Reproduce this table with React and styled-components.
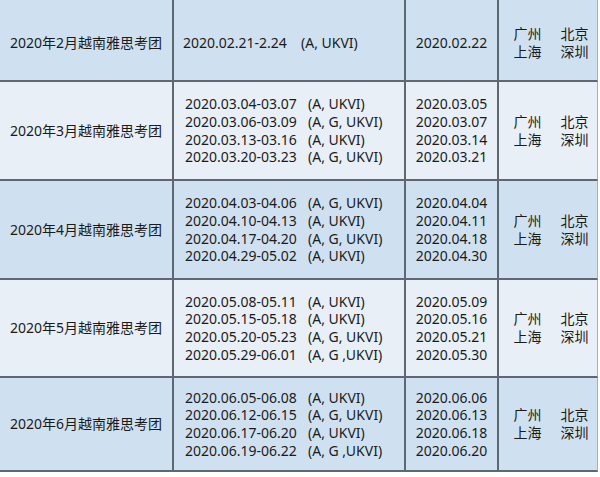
import React from "react";
import styled, { createGlobalStyle } from "styled-components";

const Global = createGlobalStyle`
  html, body { margin: 0; padding: 0; background: #ffffff; }
  body { font-family: "Noto Sans", "Noto Sans CJK SC", sans-serif; color: #1b1b1b; }
`;

const rows = [
  {
    title: "2020年2月越南雅思考团",
    periods: [["2020.02.21-2.24", "(A, UKVI)"]],
    exams: ["2020.02.22"],
    tone: "blue",
    height: 82,
    single: true,
  },
  {
    title: "2020年3月越南雅思考团",
    periods: [
      ["2020.03.04-03.07", "(A, UKVI)"],
      ["2020.03.06-03.09", "(A, G, UKVI)"],
      ["2020.03.13-03.16", "(A, UKVI)"],
      ["2020.03.20-03.23", "(A, G, UKVI)"],
    ],
    exams: ["2020.03.05", "2020.03.07", "2020.03.14", "2020.03.21"],
    tone: "light",
    height: 99,
  },
  {
    title: "2020年4月越南雅思考团",
    periods: [
      ["2020.04.03-04.06", "(A, G, UKVI)"],
      ["2020.04.10-04.13", "(A, UKVI)"],
      ["2020.04.17-04.20", "(A, G, UKVI)"],
      ["2020.04.29-05.02", "(A, UKVI)"],
    ],
    exams: ["2020.04.04", "2020.04.11", "2020.04.18", "2020.04.30"],
    tone: "blue",
    height: 99,
  },
  {
    title: "2020年5月越南雅思考团",
    periods: [
      ["2020.05.08-05.11", "(A, UKVI)"],
      ["2020.05.15-05.18", "(A, UKVI)"],
      ["2020.05.20-05.23", "(A, G, UKVI)"],
      ["2020.05.29-06.01", "(A, G ,UKVI)"],
    ],
    exams: ["2020.05.09", "2020.05.16", "2020.05.21", "2020.05.30"],
    tone: "light",
    height: 98,
  },
  {
    title: "2020年6月越南雅思考团",
    periods: [
      ["2020.06.05-06.08", "(A, UKVI)"],
      ["2020.06.12-06.15", "(A, G, UKVI)"],
      ["2020.06.17-06.20", "(A, UKVI)"],
      ["2020.06.19-06.22", "(A, G ,UKVI)"],
    ],
    exams: ["2020.06.06", "2020.06.13", "2020.06.18", "2020.06.20"],
    tone: "blue",
    height: 94,
  },
];

const Table = styled.div`
  display: grid;
  grid-template-columns: 174px 232px 93px 99px;
  width: 598px;
  font-size: 14px;
  line-height: 17.6px;
`;

const Cell = styled.div`
  box-sizing: border-box;
  height: ${(p) => p.$h}px;
  background: ${(p) => (p.$tone === "blue" ? "#cfe1f0" : "#e8eff7")};
  border-bottom: 2px solid #5f6870;
  border-right: ${(p) => (p.$last ? "1px solid #a3afba" : "2px solid #5f6870")};
  display: flex;
  align-items: center;
  justify-content: ${(p) => (p.$left ? "flex-start" : "center")};
  padding-top: ${(p) => (p.$single ? 5 : 0)}px;
  padding-left: ${(p) => (p.$left ? (p.$single ? 9 : 11) : 0)}px;
  white-space: nowrap;
`;

const Periods = styled.div`
  display: grid;
  grid-template-columns: ${(p) => (p.$single ? "118px" : "123px")} auto;
`;

const Lines = styled.div`
  display: flex;
  flex-direction: column;
  align-items: center;
`;

const Cities = styled.div`
  display: grid;
  grid-template-columns: 28px 28px;
  column-gap: 19px;
  margin-left: 6px;
`;

export default function App() {
  return (
    <>
      <Global />
      <Table>
        {rows.map((r, i) => (
          <React.Fragment key={i}>
            <Cell $tone={r.tone} $h={r.height} $single={r.single}>
              {r.title}
            </Cell>
            <Cell $tone={r.tone} $h={r.height} $single={r.single} $left>
              <Periods $single={r.single}>
                {r.periods.map(([d, t], j) => (
                  <React.Fragment key={j}>
                    <span>{d}</span>
                    <span>{t}</span>
                  </React.Fragment>
                ))}
              </Periods>
            </Cell>
            <Cell $tone={r.tone} $h={r.height} $single={r.single}>
              <Lines>
                {r.exams.map((e, j) => (
                  <span key={j}>{e}</span>
                ))}
              </Lines>
            </Cell>
            <Cell $tone={r.tone} $h={r.height} $single={r.single} $last>
              <Cities>
                <span>广州</span>
                <span>北京</span>
                <span>上海</span>
                <span>深圳</span>
              </Cities>
            </Cell>
          </React.Fragment>
        ))}
      </Table>
    </>
  );
}
